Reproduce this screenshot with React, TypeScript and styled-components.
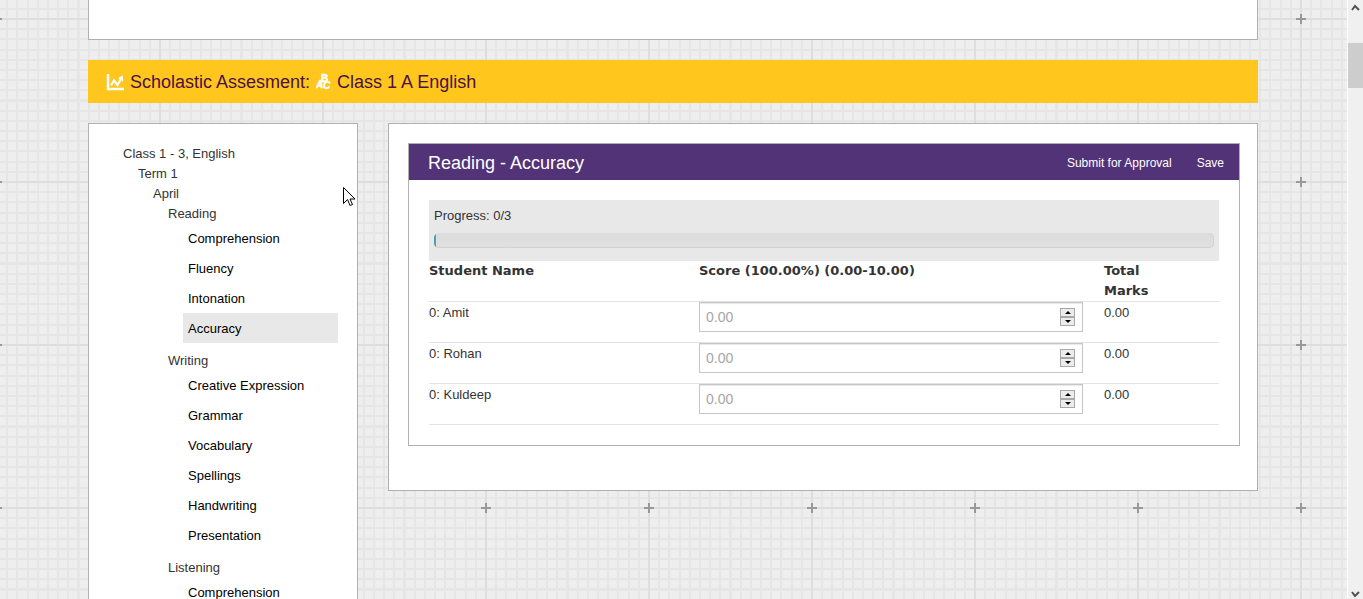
import React from 'react';
import styled, { createGlobalStyle } from 'styled-components';

const GlobalStyle = createGlobalStyle`
  * { box-sizing: border-box; }
  body {
    margin: 0;
    overflow: hidden;
    font-family: "Liberation Sans", Arial, sans-serif;
    font-size: 13px;
    line-height: 20px;
    color: #333;
  }
`;

const Shell = styled.div`
  display: flex;
  height: 100vh;
  overflow: hidden;
`;

const GridSheet = styled.div`
  flex: 1;
  min-width: 0;
  overflow: hidden;
  padding: 0 21px 0 20px;
  background-color: #eee;
  background-image:
    url("data:image/svg+xml,%3Csvg xmlns='http://www.w3.org/2000/svg' width='163' height='163'%3E%3Cpath d='M81 0v163M0 81h163' stroke='%23dedede' stroke-width='2'/%3E%3Cpath d='M76 81h10M81 76v10' stroke='%23999' stroke-width='2'/%3E%3C/svg%3E"),
    repeating-linear-gradient(90deg, #e6e6e6 0 2px, transparent 2px 6.25%),
    repeating-linear-gradient(180deg, #e6e6e6 0 2px, transparent 2px 6.25%);
  background-size: 163px 163px;
  background-position: 79px 101px, -4px 18px, -4px 18px;
`;

const Container = styled.main`
  max-width: 1170px;
  margin: 0 auto;
  display: flex;
  flex-direction: column;
  gap: 20px;
`;

const Panel = styled.section`
  background: #fff;
  border: 1px solid #b0b0b0;
`;

const PreviousPanel = styled(Panel)`
  height: 40px;
  border-top: 0;
`;

const Banner = styled.h1`
  margin: 0;
  padding: 0 18px;
  height: 43px;
  display: flex;
  align-items: center;
  gap: 6px;
  background: #ffc61e;
  color: #4a1142;
  font-size: 18px;
  font-weight: 400;
`;

const Columns = styled.div`
  display: grid;
  grid-template-columns: 270px minmax(0, 1fr);
  gap: 30px;
  align-items: start;
`;

const Sidebar = styled(Panel)`
  padding: 20px 19px 19px;
`;

const Tree = styled.ul`
  list-style: none;
  margin: 0;
  padding: 0 0 0 15px;
`;

const SkillList = styled(Tree)`
  margin: -1px 0 8px;
`;

const SkillLink = styled.a<{ $active?: boolean }>`
  display: block;
  padding: 6px 5px 4px;
  color: #000;
  text-decoration: none;
  background: ${(p) => (p.$active ? '#e8e8e8' : 'transparent')};
`;

const Content = styled(Panel)`
  padding: 19px 17px 44px 19px;
`;

const Card = styled.form`
  border: 1px solid #b0b0b0;
`;

const CardHeader = styled.header`
  display: flex;
  align-items: center;
  justify-content: space-between;
  padding: 2px 15px 0 19px;
  height: 36px;
  background: #533378;
  color: #fff;
`;

const CardTitle = styled.h2`
  margin: 0;
  font-size: 18px;
  font-weight: 400;
`;

const Actions = styled.div`
  display: flex;
  gap: 25px;
`;

const ActionButton = styled.button`
  padding: 0;
  border: 0;
  background: none;
  color: #fff;
  font: 12px/20px "Liberation Sans", Arial, sans-serif;
`;

const CardBody = styled.div`
  padding: 20px;
`;

const ProgressBox = styled.div`
  padding: 6px 5px 13px;
  background: #e8e8e8;
`;

const Track = styled.div`
  margin-top: 7px;
  height: 15px;
  overflow: hidden;
  border-radius: 5px;
  background: linear-gradient(#dcdcdc, #e1e1e1);
  box-shadow: inset 0 -1px 0 #d2d2d2, inset -1px 0 0 #d2d2d2;
`;

const Fill = styled.div`
  height: 100%;
  background: #4a9dbc;
`;

const ScoreTable = styled.table`
  width: 100%;
  table-layout: fixed;
  border-collapse: collapse;
`;

const HeadCell = styled.th<{ $width?: string }>`
  width: ${(p) => p.$width || 'auto'};
  padding: 0 60px 0 0;
  text-align: left;
  vertical-align: top;
  font-family: "DejaVu Sans", "Liberation Sans", sans-serif;
  font-weight: 700;
`;

const Row = styled.tr`
  border-bottom: 1px solid #e3e3e3;
`;

const Cell = styled.td<{ $field?: boolean }>`
  height: 41px;
  padding: ${(p) => (p.$field ? '0' : '1px 0 0')};
  vertical-align: top;
`;

const NumberField = styled.div`
  display: flex;
  align-items: center;
  height: 30px;
  margin-right: 21px;
  padding: 0 7px 0 6px;
  border: 1px solid #c6c6c6;
  background: #fff;
  box-shadow: inset 0 1px 1px #e8e8e8;
`;

const NumberInput = styled.input`
  flex: 1;
  min-width: 0;
  padding: 0;
  border: 0;
  outline: 0;
  background: none;
  font: 14px/20px "Liberation Sans", Arial, sans-serif;
  appearance: textfield;
  &::-webkit-inner-spin-button { appearance: none; }
  &::placeholder { color: #a6a6a6; }
`;

const Spinner = styled.span`
  display: flex;
  flex-direction: column;
  width: 15px;
`;

const SpinButton = styled.button`
  display: flex;
  align-items: center;
  justify-content: center;
  height: 9px;
  padding: 0;
  border: 1px solid #a8a8a8;
  background: #ececec;
`;

const Scrollbar = styled.div`
  flex: none;
  width: 16px;
  display: flex;
  flex-direction: column;
  align-items: center;
  border-left: 1px solid #fff;
  background: #f0f0f0;
  padding: 4px 0 0;
`;

const ScrollThumb = styled.div`
  width: 15px;
  height: 45px;
  margin: 31px 0 auto;
  background: #cdcdcd;
`;

const Pointer = styled.svg`
  position: absolute;
  left: 343px;
  top: 187px;
`;

const skills = [
  { name: 'Reading', items: ['Comprehension', 'Fluency', 'Intonation', 'Accuracy'] },
  {
    name: 'Writing',
    items: ['Creative Expression', 'Grammar', 'Vocabulary', 'Spellings', 'Handwriting', 'Presentation'],
  },
  { name: 'Listening', items: ['Comprehension'] },
];

const students = ['Amit', 'Rohan', 'Kuldeep'];

const ChartIcon = () => (
  <svg width="18" height="18" viewBox="0 0 18 18" fill="none" stroke="#fff" aria-hidden="true">
    <path d="M2 1v15H18" strokeWidth="2.500" />
    <path d="M5 12.500l3-5 3.500 4.500 4-7" strokeWidth="2.300" />
    <path d="M17 2.500v6l-5-3.500z" fill="#fff" stroke="none" />
  </svg>
);

const LettersIcon = () => (
  <svg
    width="15"
    height="18"
    viewBox="0 0 15 18"
    fill="#fff"
    stroke="#fff"
    strokeWidth=".5"
    fontFamily="Liberation Sans"
    fontWeight="700"
    aria-hidden="true"
  >
    <text x="0" y="15" fontSize="10" fontStyle="italic">A</text>
    <text x="5" y="9" fontSize="10">B</text>
    <text x="7" y="16" fontSize="10" fontStyle="italic">C</text>
  </svg>
);

export default function App() {
  return (
    <>
      <GlobalStyle />
      <Shell>
        <GridSheet>
          <Container>
            <PreviousPanel />
            <Banner>
              <ChartIcon />
              <span>Scholastic Assesment:</span>
              <LettersIcon />
              <span>Class 1 A English</span>
            </Banner>
            <Columns>
              <Sidebar as="nav">
                <Tree>
                  <li>
                    Class 1 - 3, English
                    <Tree>
                      <li>
                        Term 1
                        <Tree>
                          <li>
                            April
                            <Tree>
                              {skills.map((skill) => (
                                <li key={skill.name}>
                                  {skill.name}
                                  <SkillList>
                                    {skill.items.map((item) => (
                                      <li key={item}>
                                        <SkillLink href="#" $active={item === 'Accuracy'}>{item}</SkillLink>
                                      </li>
                                    ))}
                                  </SkillList>
                                </li>
                              ))}
                            </Tree>
                          </li>
                        </Tree>
                      </li>
                    </Tree>
                  </li>
                </Tree>
              </Sidebar>
              <Content>
                <Card>
                  <CardHeader>
                    <CardTitle>Reading - Accuracy</CardTitle>
                    <Actions>
                      <ActionButton type="button">Submit for Approval</ActionButton>
                      <ActionButton type="button">Save</ActionButton>
                    </Actions>
                  </CardHeader>
                  <CardBody>
                    <ProgressBox>
                      Progress: 0/3
                      <Track role="progressbar" aria-label="Progress" aria-valuenow={0} aria-valuemax={3}>
                        <Fill style={{ width: '2px' }} />
                      </Track>
                    </ProgressBox>
                    <ScoreTable>
                      <thead>
                        <Row>
                          <HeadCell $width="270px">Student Name</HeadCell>
                          <HeadCell>Score (100.00%) (0.00-10.00)</HeadCell>
                          <HeadCell $width="115px">Total Marks</HeadCell>
                        </Row>
                      </thead>
                      <tbody>
                        {students.map((name) => (
                          <Row key={name}>
                            <Cell>0: {name}</Cell>
                            <Cell $field>
                              <NumberField>
                                <NumberInput type="number" placeholder="0.00" aria-label={`Score for ${name}`} />
                                <Spinner>
                                  <SpinButton type="button" aria-label="Increase">
                                    <svg width="6" height="3"><path d="M0 3L3 0 6 3z" /></svg>
                                  </SpinButton>
                                  <SpinButton type="button" aria-label="Decrease">
                                    <svg width="6" height="3"><path d="M0 0L3 3 6 0z" /></svg>
                                  </SpinButton>
                                </Spinner>
                              </NumberField>
                            </Cell>
                            <Cell>0.00</Cell>
                          </Row>
                        ))}
                      </tbody>
                    </ScoreTable>
                  </CardBody>
                </Card>
              </Content>
            </Columns>
          </Container>
        </GridSheet>
        <Scrollbar aria-hidden="true">
          <svg width="9" height="8" fill="none" stroke="#505050" strokeWidth="2"><path d="M1 6l3-4 4 4" /></svg>
          <ScrollThumb />
          <svg width="9" height="8" fill="none" stroke="#505050" strokeWidth="2"><path d="M1 1l3 4 4-4" /></svg>
        </Scrollbar>
      </Shell>
      <Pointer width="13" height="20" fill="#fff" stroke="#000" aria-hidden="true">
        <path d="M.5.5v16l4-4 2.500 6 2.500-1-2.500-5.500h5z" />
      </Pointer>
    </>
  );
}
